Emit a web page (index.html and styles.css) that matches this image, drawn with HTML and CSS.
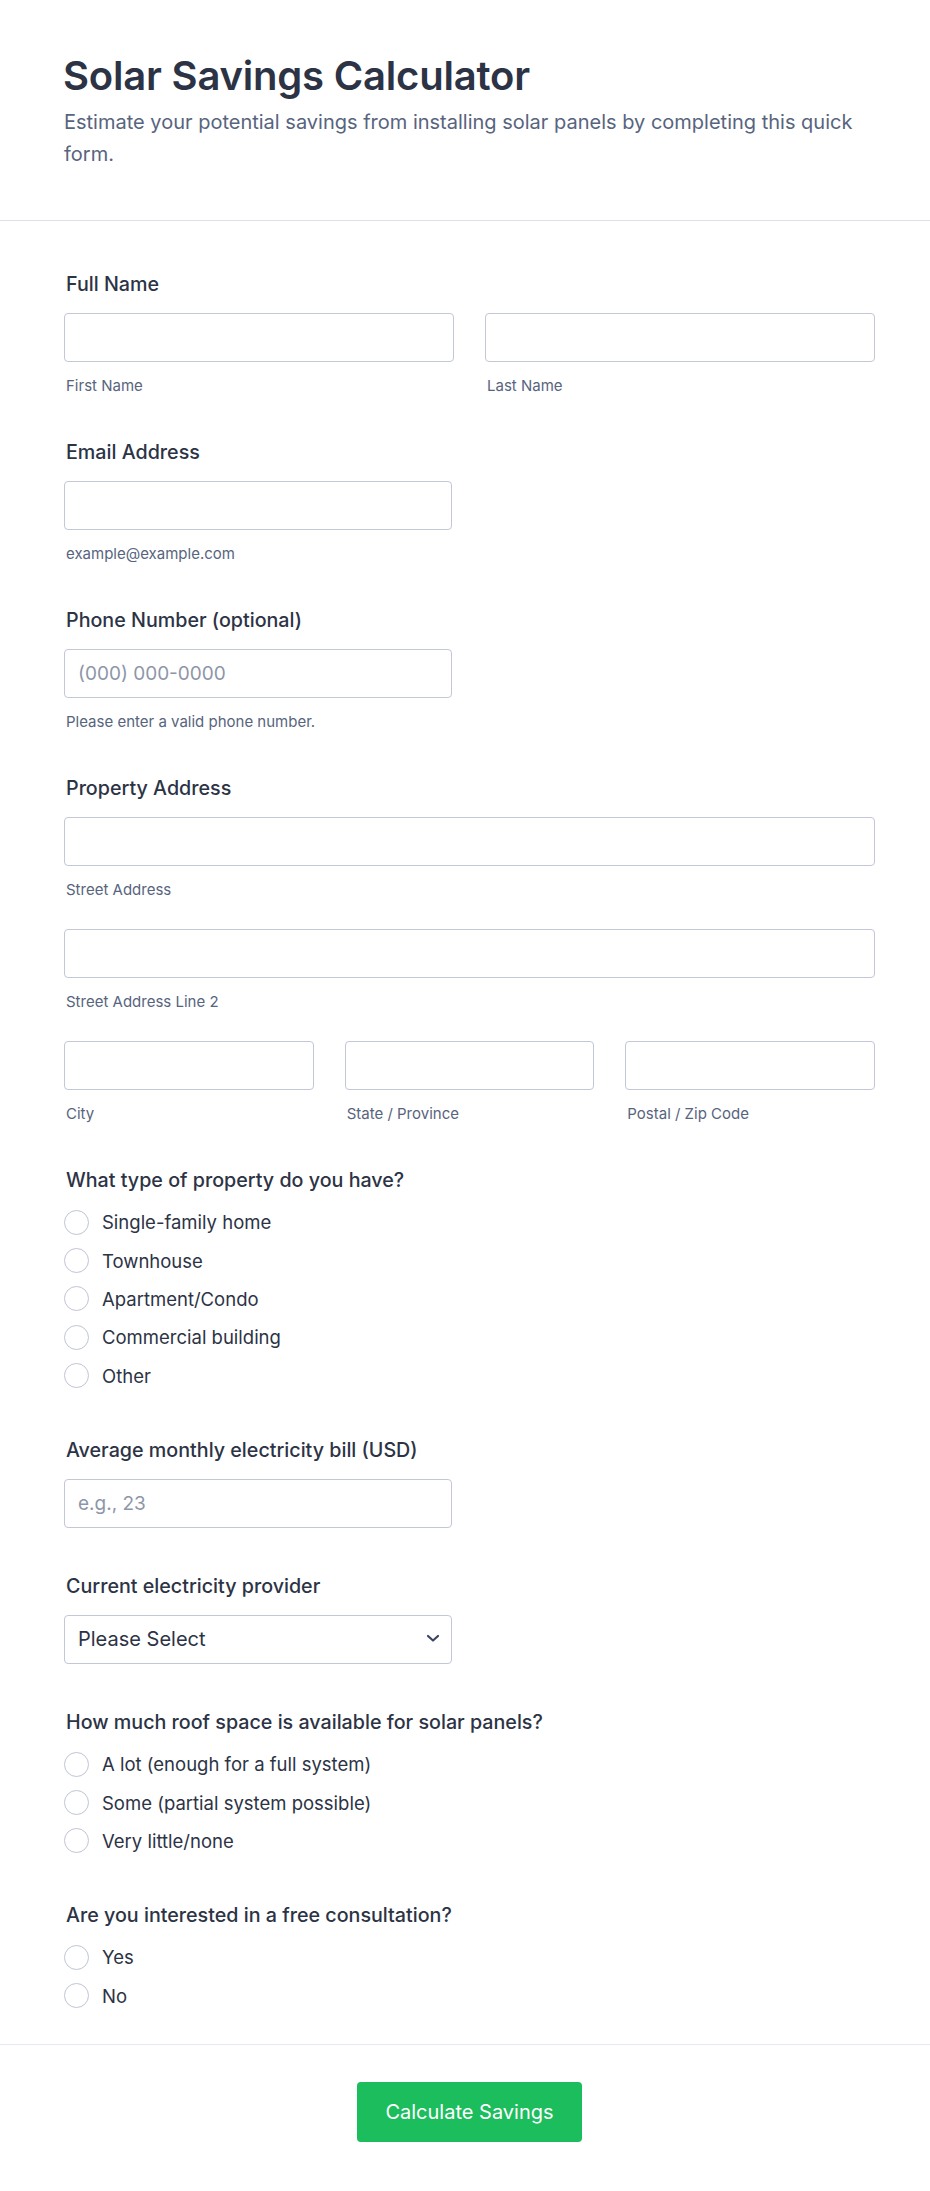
FILE: index.html
```html
<!DOCTYPE html>
<html lang="en">
<head>
<meta charset="utf-8">
<title>Solar Savings Calculator</title>
<link rel="stylesheet" href="styles.css">
</head>
<body>
<div class="page">
  <header class="form-header">
    <h1 class="form-title">Solar Savings Calculator</h1>
    <p class="form-subtitle">Estimate your potential savings from installing solar panels by completing this quick form.</p>
  </header>

  <form class="form-body">
    <div class="field">
      <label class="field-label">Full Name</label>
      <div class="grid grid-2">
        <div class="sub">
          <input class="input" type="text">
          <span class="sublabel">First Name</span>
        </div>
        <div class="sub">
          <input class="input" type="text">
          <span class="sublabel">Last Name</span>
        </div>
      </div>
    </div>

    <div class="field">
      <label class="field-label">Email Address</label>
      <div class="half">
        <input class="input" type="email">
        <span class="sublabel">example@example.com</span>
      </div>
    </div>

    <div class="field">
      <label class="field-label">Phone Number (optional)</label>
      <div class="half">
        <input class="input" type="tel" placeholder="(000) 000-0000">
        <span class="sublabel">Please enter a valid phone number.</span>
      </div>
    </div>

    <div class="field">
      <label class="field-label">Property Address</label>
      <div class="address">
        <div class="sub">
          <input class="input" type="text">
          <span class="sublabel">Street Address</span>
        </div>
        <div class="sub">
          <input class="input" type="text">
          <span class="sublabel">Street Address Line 2</span>
        </div>
        <div class="grid grid-3">
          <div class="sub">
            <input class="input" type="text">
            <span class="sublabel">City</span>
          </div>
          <div class="sub">
            <input class="input" type="text">
            <span class="sublabel">State / Province</span>
          </div>
          <div class="sub">
            <input class="input" type="text">
            <span class="sublabel">Postal / Zip Code</span>
          </div>
        </div>
      </div>
    </div>

    <div class="field field-choice">
      <label class="field-label">What type of property do you have?</label>
      <div class="radios">
        <label class="radio"><input type="radio" name="ptype"><span>Single-family home</span></label>
        <label class="radio"><input type="radio" name="ptype"><span>Townhouse</span></label>
        <label class="radio"><input type="radio" name="ptype"><span>Apartment/Condo</span></label>
        <label class="radio"><input type="radio" name="ptype"><span>Commercial building</span></label>
        <label class="radio"><input type="radio" name="ptype"><span>Other</span></label>
      </div>
    </div>

    <div class="field field-plain">
      <label class="field-label">Average monthly electricity bill (USD)</label>
      <div class="half">
        <input class="input" type="text" placeholder="e.g., 23">
      </div>
    </div>

    <div class="field field-plain">
      <label class="field-label">Current electricity provider</label>
      <div class="half select-wrap">
        <select class="input select">
          <option>Please Select</option>
        </select>
        <svg class="chevron" width="14" height="9" viewBox="0 0 14 9" aria-hidden="true">
          <path d="M2 2 L7 6.5 L12 2" fill="none" stroke="#3b4560" stroke-width="2.2" stroke-linecap="round" stroke-linejoin="round"/>
        </svg>
      </div>
    </div>

    <div class="field field-choice">
      <label class="field-label">How much roof space is available for solar panels?</label>
      <div class="radios">
        <label class="radio"><input type="radio" name="roof"><span>A lot (enough for a full system)</span></label>
        <label class="radio"><input type="radio" name="roof"><span>Some (partial system possible)</span></label>
        <label class="radio"><input type="radio" name="roof"><span>Very little/none</span></label>
      </div>
    </div>

    <div class="field field-choice">
      <label class="field-label">Are you interested in a free consultation?</label>
      <div class="radios">
        <label class="radio"><input type="radio" name="consult"><span>Yes</span></label>
        <label class="radio"><input type="radio" name="consult"><span>No</span></label>
      </div>
    </div>
  </form>

  <footer class="form-footer">
    <button class="submit" type="button">Calculate Savings</button>
  </footer>
</div>
</body>
</html>
```

FILE: styles.css
```css
* {
  box-sizing: border-box;
}

html, body {
  margin: 0;
  padding: 0;
  background: #ffffff;
}

body {
  font-family: Inter, "Noto Sans", "Liberation Sans", sans-serif;
  color: #2c3345;
}

.page {
  width: 930px;
  min-height: 2191px;
  background: #ffffff;
}

/* Header */
.form-header {
  padding: 52px 55px 50px 63px;
  border-bottom: 1px solid #dfdfeb;
}

.form-title {
  margin: 0;
  font-size: 40px;
  line-height: 48px;
  font-weight: 600;
  color: #2c3345;
  letter-spacing: -0.2px;
}

.form-subtitle {
  margin: 6px 0 0 1px;
  font-size: 20px;
  line-height: 32px;
  font-weight: 400;
  color: #57647e;
}

/* Body */
.form-body {
  padding: 51px 55px 30px 64px;
  display: flex;
  flex-direction: column;
  gap: 44px;
}

.field {
  display: flex;
  flex-direction: column;
}

.field-plain {
  padding-bottom: 2px;
}

.field-choice {
  margin-bottom: -1px;
}

.field-label {
  display: block;
  font-size: 19.7px;
  line-height: 24px;
  font-weight: 500;
  color: #2c3345;
  padding-left: 2px;
  margin-bottom: 17px;
}

.grid {
  display: grid;
  column-gap: 31px;
}

.grid-2 {
  grid-template-columns: 1fr 1fr;
}

.grid-3 {
  grid-template-columns: 1fr 1fr 1fr;
}

.half {
  width: 388px;
  display: flex;
  flex-direction: column;
}

.sub {
  display: flex;
  flex-direction: column;
}

.address {
  display: flex;
  flex-direction: column;
  gap: 29px;
}

.input {
  display: block;
  width: 100%;
  height: 49px;
  margin: 0;
  padding: 0 13px;
  border: 1px solid #c3c7d6;
  border-radius: 4px;
  background: #ffffff;
  font-family: Inter, "Noto Sans", "Liberation Sans", sans-serif;
  font-size: 19px;
  color: #2c3345;
  outline: none;
}

.input::placeholder {
  color: #8d96a8;
}

.sublabel {
  display: block;
  margin-top: 14px;
  font-size: 15px;
  line-height: 20px;
  color: #57647e;
  padding-left: 2px;
}

.select-wrap {
  position: relative;
}

.select {
  -webkit-appearance: none;
  appearance: none;
  font-size: 20px;
  cursor: pointer;
}

.chevron {
  position: absolute;
  right: 12px;
  top: 19px;
  pointer-events: none;
}

/* Radios */
.radios {
  display: flex;
  flex-direction: column;
  margin-top: -6px;
}

.radio {
  display: flex;
  align-items: center;
  gap: 13px;
  height: 38.4px;
  font-size: 18.5px;
  color: #2c3345;
}

.radio input {
  -webkit-appearance: none;
  appearance: none;
  flex: none;
  width: 25px;
  height: 25px;
  margin: 0;
  border: 1px solid #bfc5d2;
  border-radius: 50%;
  background: #ffffff;
}

/* Footer */
.form-footer {
  border-top: 1px solid #e6e9ef;
  padding: 37px 55px 49px 64px;
  display: flex;
  justify-content: center;
}

.submit {
  height: 60px;
  padding: 0 28px;
  border: none;
  border-radius: 4px;
  background: #1bbd5d;
  color: #ffffff;
  font-family: Inter, "Noto Sans", "Liberation Sans", sans-serif;
  font-size: 20px;
  font-weight: 400;
  cursor: pointer;
}
```
